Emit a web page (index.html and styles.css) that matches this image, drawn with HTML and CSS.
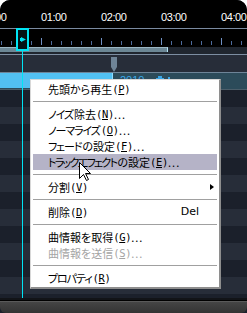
FILE: index.html
```html
<!DOCTYPE html>
<html lang="ja">
<head>
<meta charset="utf-8">
<title>Timeline</title>
<link rel="stylesheet" href="styles.css">
</head>
<body>
<div class="window">
  <div class="timebar">
    <div class="labels"><span>00:00</span><span>01:00</span><span>02:00</span><span>03:00</span><span>04:00</span></div>
  </div>
  <div class="ruler"></div>
  <div class="scrollrow"><div class="thumb"></div></div>
  <div class="markerlane">
    <svg class="marker" width="6" height="15" viewBox="0 0 6 15"><path d="M0 0H6V10L3 15L0 10Z" fill="#6f8497"/></svg>
  </div>
  <div class="track">
    <div class="clip"></div>
    <div class="cliptitle">2010</div>
    <svg class="clipicon" width="8" height="8" viewBox="0 0 8 8"><path d="M0 3H2V1H6V3H8V8H0Z" fill="#3aa6e6"/></svg>
    <span class="clipdot"></span>
  </div>
  <div class="rows"></div>
  <div class="bottombar"></div>

  <div class="playbox">
    <svg width="6" height="5" viewBox="0 0 6 5"><path d="M0 1H1V0L6 2.5L1 5V4H0Z" fill="#00e4f4"/></svg>
  </div>
  <div class="playline"></div>

  <div class="menu">
    <div class="item">先頭から再生<span class="mn">(<u>P</u>)</span></div>
    <div class="sep"></div>
    <div class="item"><span class="k">ノイズ</span>除去<span class="mn">(<u>N</u>)</span><span class="dots">...</span></div>
    <div class="item"><span class="k">ノーマライズ</span><span class="mn">(<u>O</u>)</span><span class="dots">...</span></div>
    <div class="item"><span class="k">フェード</span>の設定<span class="mn">(<u>F</u>)</span><span class="dots">...</span></div>
    <div class="item active"><span class="k tight">トラックエフェクト</span>の設定<span class="mn">(<u>E</u>)</span><span class="dots">...</span></div>
    <div class="sep"></div>
    <div class="item sub">分割<span class="mn">(<u>V</u>)</span><span class="arrow"></span></div>
    <div class="sep"></div>
    <div class="item">削除<span class="mn">(<u>D</u>)</span><span class="accel">Del</span></div>
    <div class="sep"></div>
    <div class="item">曲情報を取得<span class="mn">(<u>G</u>)</span><span class="dots">...</span></div>
    <div class="item disabled">曲情報を送信<span class="mn">(<u>S</u>)</span><span class="dots">...</span></div>
    <div class="sep"></div>
    <div class="item"><span class="k">プロパティ</span><span class="mn">(<u>R</u>)</span></div>
  </div>

  <svg class="cursor" width="13" height="20" viewBox="0 0 13 20"><path d="M0.5 0.5V16.5L4.5 12.5L7.5 18.5L9.5 17.5L6.5 11.5H11.5Z" fill="#fff" stroke="#000" stroke-width="1" stroke-linejoin="miter"/></svg>
</div>
</body>
</html>
```

FILE: styles.css
```css
* { box-sizing: border-box; margin: 0; padding: 0; }
html, body { width: 247px; height: 313px; background: #fff; overflow: hidden; }

.window {
  position: relative;
  width: 247px;
  height: 313px;
  display: flex;
  flex-direction: column;
  border-radius: 10px 10px 0 0;
  overflow: hidden;
  background: #1c212c;
}

.timebar {
  flex: none;
  height: 29px;
  background: #000;
  border-bottom: 1px solid #7a8aa0;
  overflow: hidden;
}
.labels {
  display: flex;
  margin-left: -19px;
  padding-top: 11px;
  color: #fff;
  font: 11px/12px "Liberation Sans", Arial, sans-serif;
  letter-spacing: -0.4px;
}
.labels span { flex: none; width: 60px; }

.ruler {
  flex: none;
  height: 18px;
  background-color: #000;
  background-image:
    linear-gradient(to right, #6f90c4 1px, transparent 1px),
    linear-gradient(to right, #4e6c9c 1px, transparent 1px);
  background-size: 60px 7px, 10px 4px;
  background-position: 41px 9px, 1px 12px;
  background-repeat: repeat-x;
}

.scrollrow {
  flex: none;
  height: 8px;
  background: #20262f;
  border-bottom: 1px solid #7d8ea2;
}
.thumb {
  width: 168px;
  height: 5px;
  background: #6c8795;
  border-top: 1px solid #9ab6c4;
  border-right: 1px solid #b4e4f4;
}

.markerlane {
  flex: none;
  height: 18px;
  background: #272d39;
  border-bottom: 1px solid #6e8498;
}
.marker { display: block; margin: 2px 0 0 111px; }

.track {
  flex: none;
  height: 17px;
  background: #2c4b5a;
  border-bottom: 1px solid #4c5e6a;
  display: flex;
  align-items: flex-start;
}
.clip {
  width: 113px;
  height: 15px;
  background: #52c0f2;
  border-right: 1px solid #8fdcff;
}
.cliptitle {
  margin-left: 7px;
  margin-top: 1px;
  height: 5px;
  overflow: hidden;
  color: #3aa8e8;
  font: 11px/12px "Liberation Sans", Arial, sans-serif;
  width: 30px;
}
.clipicon { margin-left: 6px; margin-top: 2px; }
.clipdot { width: 2px; height: 3px; background: #3aa6e6; margin: 4px 0 0 4px; }

.rows {
  flex: 1;
  background: repeating-linear-gradient(#1b202b 0 17px, #272d39 17px 34px);
}

.bottombar {
  flex: none;
  height: 15px;
  background: linear-gradient(#121418 0 2px, #000 2px 3px, #5a5a5a 3px 4px, #454545 4px, #333 100%);
  border-radius: 0 0 6px 6px;
}

.playbox {
  position: absolute;
  left: 16px;
  top: 28px;
  width: 13px;
  height: 23px;
  border: 2px solid #00e4f4;
  background: #041216;
  padding: 7px 0 0 2px;
}
.playbox svg { display: block; }
.playline {
  position: absolute;
  left: 22px;
  top: 51px;
  width: 1px;
  height: 247px;
  background: #00e4f4;
}

.menu {
  position: absolute;
  left: 30px;
  top: 79px;
  width: 191px;
  height: 210px;
  background: #fff;
  border-top: 1px solid #d8d8d8;
  border-left: 1px solid #d8d8d8;
  border-right: 2px solid #8e8e8e;
  border-bottom: 2px solid #8e8e8e;
  padding: 1px 2px;
  font-family: "Noto Sans CJK JP", sans-serif;
  font-size: 11px;
  font-feature-settings: "palt";
  color: #000;
}
.item {
  display: flex;
  align-items: center;
  height: 16px;
  line-height: 16px;
  padding-left: 15px;
  white-space: nowrap;
}
.item.active { background: #b5b3c7; }
.item.disabled { color: #a4a4a4; }
.k { letter-spacing: -1.1px; margin-right: 1px; }
.k.tight { letter-spacing: -1.7px; }
.mn {
  font-family: "DejaVu Sans Mono", monospace;
  font-size: 10.5px;
  letter-spacing: -0.3px;
}
.mn u { text-underline-offset: 1px; }
.dots { letter-spacing: 1px; }
.accel {
  margin-left: auto;
  margin-right: 18px;
  font-family: "DejaVu Sans", sans-serif;
  font-size: 11px;
}
.arrow {
  margin-left: auto;
  margin-right: 3px;
  width: 0;
  height: 0;
  border-top: 3.5px solid transparent;
  border-bottom: 3.5px solid transparent;
  border-left: 4px solid #000;
}
.sep {
  height: 1px;
  margin: 4px 0;
  background: #a0a0a0;
}

.cursor {
  position: absolute;
  left: 79px;
  top: 162px;
}
```
